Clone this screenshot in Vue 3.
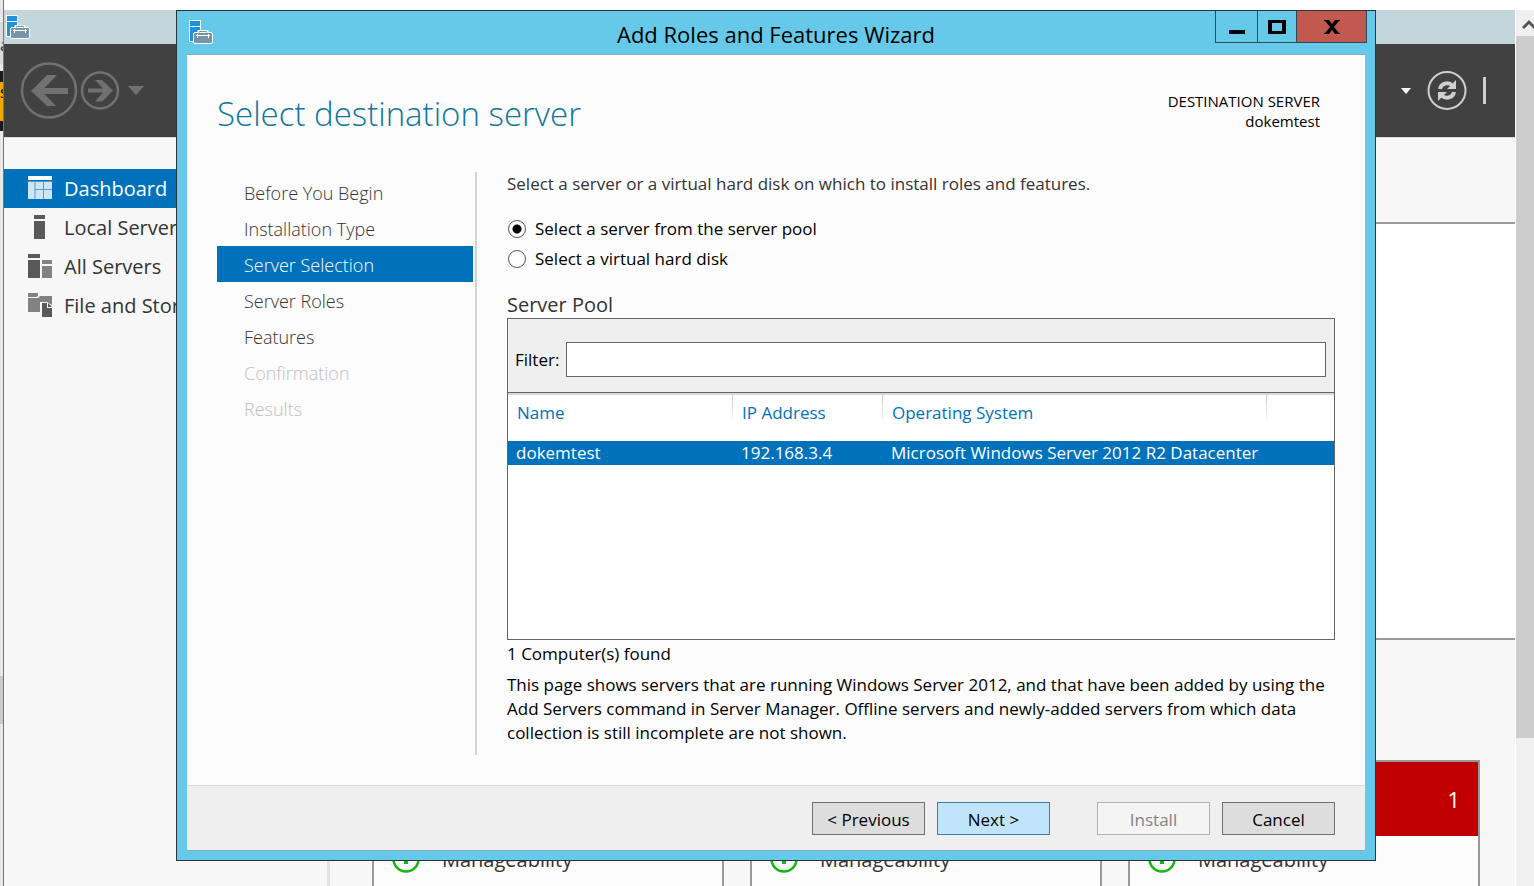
<script setup>
import { ref } from 'vue'

const sideItems = [
  { label: 'Dashboard', icon: 'dashboard', active: true },
  { label: 'Local Server', icon: 'local' },
  { label: 'All Servers', icon: 'all' },
  { label: 'File and Storage', icon: 'files' },
]
const steps = [
  { label: 'Before You Begin' },
  { label: 'Installation Type' },
  { label: 'Server Selection', state: 'current' },
  { label: 'Server Roles' },
  { label: 'Features' },
  { label: 'Confirmation', state: 'disabled' },
  { label: 'Results', state: 'disabled' },
]
const tiles = ['', '', '1']
const source = ref('pool')
const filter = ref('')
</script>

<template>
  <div class="screen">
    <div class="behind" aria-hidden="true">
      <div class="behind-tab">a</div>
      <div class="behind-ad">s</div>
      <div class="behind-thumb"></div>
    </div>

    <div class="manager">
      <header class="manager-title">
        <svg class="app-icon" viewBox="0 0 24 24">
          <rect x="0.5" y="0.5" width="11" height="21" fill="#1f8fdf" stroke="#fff" />
          <path d="M1 6.5h10" stroke="#fff" />
          <path d="M10 13v-1.500h8V13" fill="none" stroke="#fff" stroke-width="3" />
          <rect x="4.5" y="12.5" width="19" height="11" rx="1.5" fill="#7794aa" stroke="#fff" />
          <path d="M10.500 12.500v-1h7v1" fill="none" stroke="#7794aa" />
          <path d="M7 15.500h14" stroke="#fff" />
          <path d="M8.500 14v4M19.500 14v4" stroke="#fff" />
        </svg>
      </header>
      <div class="manager-bar">
        <button class="plain" aria-label="Back">
          <svg width="58" height="58" viewBox="0 0 58 58">
            <circle cx="29" cy="28.5" r="27" fill="none" stroke="#717171" stroke-width="2.5" />
            <path d="M11 29 27 13h10L24.500 26H48v6H24.500L36 44H27z" fill="#717171" />
          </svg>
        </button>
        <button class="plain" aria-label="Forward">
          <svg width="40" height="40" viewBox="0 0 40 40">
            <circle cx="20" cy="19.5" r="18" fill="none" stroke="#717171" stroke-width="2.5" />
            <path d="M33 19.500 22 9h-7l8 8.500H8v4h15l-8 9h7z" fill="#717171" />
          </svg>
        </button>
        <button class="plain history" aria-label="History">
          <svg width="16" height="9" viewBox="0 0 16 9"><path d="M0 0h16L8 9z" fill="#717171" /></svg>
        </button>
        <div class="bar-tools">
          <button class="plain" aria-label="Breadcrumb menu">
            <svg width="10" height="6" viewBox="0 0 10 6"><path d="M0 0h10L5 6z" fill="#fff" /></svg>
          </button>
          <button class="plain" aria-label="Refresh">
            <svg width="40" height="40" viewBox="0 0 40 40">
              <circle cx="20" cy="19.500" r="18.500" fill="none" stroke="#cfcfcf" stroke-width="2" />
              <path d="M13 18c1-6 8-7 12-4" fill="none" stroke="#cfcfcf" stroke-width="4" />
              <path d="M29 9v9h-9z" fill="#cfcfcf" />
              <path d="M27 21c-1 6-8 7-12 4" fill="none" stroke="#cfcfcf" stroke-width="4" />
              <path d="M11 30v-9h9z" fill="#cfcfcf" />
            </svg>
          </button>
          <span class="bar-rule"></span>
        </div>
      </div>
      <div class="manager-body">
        <nav class="side">
          <a v-for="item in sideItems" :key="item.label" href="#" class="side-item" :class="{ active: item.active }">
            <svg width="24" height="24" viewBox="0 0 24 24">
              <template v-if="item.icon === 'dashboard'">
                <path d="M0 0h24v4H0z" fill="#fff" />
                <path d="M0 5h24v18H0z" fill="#cfe4f4" />
                <path d="M7 6v17M15.500 6v17M7 13.500h17M0 5.500h24" stroke="#4a9fd8" />
              </template>
              <path v-else-if="item.icon === 'local'" d="M6 0h11v4H6zM6 6h11v18H6z" fill="#595959" />
              <template v-else-if="item.icon === 'all'">
                <path d="M0 0h12v4H0zM0 6h12v18H0z" fill="#595959" />
                <path d="M14 6h10v4H14zM14 12h10v12H14z" fill="#828282" />
              </template>
              <template v-else>
                <path d="M0 0h10v3l-2 1H0zM0 5h10l2-2h12v9l-5-3h-7v10H0z" fill="#828282" />
                <path d="M14 10h5v5h5v9H14zM20 10l4 4h-4z" fill="#595959" />
              </template>
            </svg>
            <span>{{ item.label }}</span>
          </a>
        </nav>
        <main class="dash">
          <section class="welcome"></section>
          <div class="tiles">
            <section v-for="(count, i) in tiles" :key="i" class="tile">
              <div class="tile-head">{{ count }}</div>
              <div class="tile-row">
                <svg width="28" height="28" viewBox="0 0 28 28">
                  <circle cx="14" cy="13" r="12.5" fill="none" stroke="#12b812" stroke-width="2.5" />
                  <path d="M14 4l6 7h-4v7h-4v-7H8z" fill="#12b812" />
                </svg>
                <span>Manageability</span>
              </div>
            </section>
          </div>
        </main>
      </div>
    </div>

    <div class="scroll" aria-hidden="true">
      <div class="scroll-up">
        <svg width="14" height="10" viewBox="0 0 14 10"><path d="M1 9l6-6 6 6" fill="none" stroke="#555" stroke-width="3" /></svg>
      </div>
      <div class="scroll-thumb"></div>
    </div>

    <section class="wizard" role="dialog" aria-labelledby="wizard-title">
      <header class="wizard-title">
        <svg class="app-icon" viewBox="0 0 24 24">
          <rect x="0.5" y="0.5" width="11" height="21" fill="#1f8fdf" stroke="#fff" />
          <path d="M1 6.500h10" stroke="#fff" />
          <path d="M10 13v-1.500h8V13" fill="none" stroke="#fff" stroke-width="3" />
          <rect x="4.5" y="12.5" width="19" height="11" rx="1.5" fill="#7794aa" stroke="#fff" />
          <path d="M10.500 12.500v-1h7v1" fill="none" stroke="#7794aa" />
          <path d="M7 15.500h14" stroke="#fff" />
          <path d="M8.500 14v4M19.500 14v4" stroke="#fff" />
        </svg>
        <h1 id="wizard-title">Add Roles and Features Wizard</h1>
        <div class="win-buttons">
          <button class="minimize" aria-label="Minimize">
            <svg width="16" height="14" viewBox="0 0 16 14"><path d="M0 10h16v4H0z" /></svg>
          </button>
          <button class="maximize" aria-label="Maximize">
            <svg width="18" height="14" viewBox="0 0 18 14"><path d="M0 0h18v14H0zM4 3v8h10V3z" fill-rule="evenodd" /></svg>
          </button>
          <button class="close" aria-label="Close">
            <svg width="16" height="14" viewBox="0 0 16 14"><path d="M0 0h5l3 4 3-4h5v1h-1l-5 6 5 6h1v1h-5l-3-4-3 4H0v-1h1l5-6-5-6H0z" /></svg>
          </button>
        </div>
      </header>

      <div class="wizard-client">
        <div class="wizard-head">
          <h2>Select destination server</h2>
          <p class="destination">DESTINATION SERVER<br />dokemtest</p>
        </div>
        <div class="wizard-body">
          <nav class="steps">
            <a v-for="step in steps" :key="step.label" href="#" :class="step.state">{{ step.label }}</a>
          </nav>
          <div class="page">
            <p class="intro">Select a server or a virtual hard disk on which to install roles and features.</p>
            <div class="options">
              <label><input v-model="source" type="radio" name="source" value="pool" />Select a server from the server pool</label>
              <label><input v-model="source" type="radio" name="source" value="disk" />Select a virtual hard disk</label>
            </div>
            <h3>Server Pool</h3>
            <div class="pool">
              <div class="filter">
                <label for="filter">Filter:</label>
                <input id="filter" v-model="filter" type="text" />
              </div>
              <table>
                <colgroup><col class="c-name" /><col class="c-ip" /><col class="c-os" /><col /></colgroup>
                <thead>
                  <tr><th>Name</th><th>IP Address</th><th>Operating System</th><th></th></tr>
                </thead>
                <tbody>
                  <tr><td>dokemtest</td><td>192.168.3.4</td><td>Microsoft Windows Server 2012 R2 Datacenter</td><td></td></tr>
                </tbody>
              </table>
            </div>
            <p class="found">1 Computer(s) found</p>
            <p class="note">This page shows servers that are running Windows Server 2012, and that have been added by using the Add Servers command in Server Manager. Offline servers and newly-added servers from which data collection is still incomplete are not shown.</p>
          </div>
        </div>
        <footer class="actions">
          <button>&lt; Previous</button>
          <button class="primary">Next &gt;</button>
          <button class="install" disabled>Install</button>
          <button>Cancel</button>
        </footer>
      </div>
    </section>
  </div>
</template>

<style>
body {
  margin: 0;
  background: #fff;
}
</style>

<style scoped>
* {
  box-sizing: border-box;
}
.screen {
  position: relative;
  display: flex;
  height: 100vh;
  overflow: hidden;
  font-family: "Open Sans", "Noto Sans", sans-serif;
  font-size: 17px;
  line-height: 24px;
  color: #000;
}
h1, h2, h3, p {
  margin: 0;
  font-weight: 400;
}
a {
  text-decoration: none;
  color: inherit;
}
button {
  font: inherit;
  padding: 0;
  border: 0;
  background: none;
}
svg {
  display: block;
  flex: none;
}
.behind {
  width: 4px;
  flex: none;
  background: #e8e8e6;
  border-right: 1px solid #777;
  overflow: hidden;
  display: flex;
  flex-direction: column;
}
.behind-tab {
  margin-top: 22px;
  height: 42px;
  background: #d9dadc;
  line-height: 46px;
  color: #333;
}
.behind-ad {
  margin-top: 7px;
  height: 60px;
  flex: none;
  background: #eaa800;
  border: solid #1a1a1a;
  border-width: 11px 0 10px;
  line-height: 20px;
}
.behind-thumb {
  margin-top: 545px;
  height: 48px;
  background: #cbcac8;
}
.manager {
  flex: 1;
  min-width: 0;
  margin-top: 10px;
  display: flex;
  flex-direction: column;
  background: #f7f7f7;
}
.manager-title {
  height: 34px;
  flex: none;
  padding: 5px 2px;
  background: #c3d6dc;
}
.app-icon {
  width: 24px;
  height: 24px;
}
.manager-bar {
  height: 94px;
  flex: none;
  display: flex;
  align-items: center;
  gap: 2px;
  padding: 0 29px 0 16px;
  background: #414141;
  border-bottom: 1px solid #dcdcdc;
}
.history {
  margin-left: 6px;
}
.bar-tools {
  margin-left: auto;
  display: flex;
  align-items: center;
  gap: 16px;
}
.bar-rule {
  width: 3px;
  height: 27px;
  background: #cfcfcf;
}
.manager-body {
  flex: 1;
  min-height: 0;
  display: flex;
}
.side {
  width: 326px;
  flex: none;
  padding-top: 31px;
  border-right: 3px solid #e3e3e3;
  font-size: 20px;
  line-height: 26px;
  color: #333;
}
.side-item {
  height: 39px;
  display: flex;
  align-items: flex-start;
  gap: 12px;
  padding: 7px 0 0 24px;
}
.side-item.active {
  background: #0072bc;
  color: #fff;
}
.dash {
  flex: 1;
  min-width: 0;
  padding-top: 84px;
}
.welcome {
  height: 418px;
  margin-left: 42px;
  border: solid #999;
  border-width: 2px 0 2px 2px;
  background: #fff;
}
.tiles {
  display: flex;
  gap: 26px;
  margin: 120px 35px 0 42px;
}
.tile {
  flex: 1;
  border: 2px solid #999;
  background: #fcfcfc;
}
.tile-head {
  height: 74px;
  padding-right: 18px;
  line-height: 74px;
  text-align: right;
  font-size: 22px;
  color: #fff;
  background: #c00000;
}
.tile-row {
  display: flex;
  align-items: center;
  gap: 22px;
  height: 100px;
  padding: 0 18px 52px;
  font-size: 20px;
  color: #333;
}
.scroll {
  width: 19px;
  flex: none;
  margin-top: 10px;
  border-left: 1px solid #fff;
  background: #f0f0f0;
}
.scroll-up {
  height: 26px;
  padding: 9px 0 0 6px;
  overflow: hidden;
}
.scroll-thumb {
  height: 702px;
  background: #cdcdcd;
}
.wizard {
  position: absolute;
  top: 10px;
  left: 176px;
  right: 158px;
  padding: 0 10px 9px;
  border: 1px solid #2b3338;
  background: #66c9ea;
}
.wizard-title {
  height: 43px;
  display: grid;
  grid-template-columns: 1fr auto 1fr;
  align-items: start;
}
.wizard-title .app-icon {
  margin: 9px 0 0 2px;
}
.wizard-title h1 {
  font-size: 22px;
  line-height: 46px;
}
.win-buttons {
  display: flex;
  justify-self: end;
  margin-right: -2px;
  border: 1px solid #2b4a56;
  border-top: 0;
}
.win-buttons button {
  height: 31px;
  display: grid;
  place-items: center;
}
.win-buttons button + button {
  border-left: 1px solid #2b4a56;
}
.minimize {
  width: 41px;
}
.maximize {
  width: 39px;
}
.win-buttons .close {
  width: 70px;
  background: #c1594f;
}
.wizard-client {
  border: solid #7fa9bd;
  border-width: 1px 0;
  background: #fcfcfc;
}
.wizard-head {
  display: flex;
  justify-content: space-between;
  padding: 36px 45px 0 30px;
}
.wizard-head h2 {
  font-size: 33px;
  font-weight: 300;
  line-height: 46px;
  color: #0f769c;
}
.destination {
  text-align: right;
  font-size: 15px;
  line-height: 20px;
}
.wizard-body {
  display: flex;
  gap: 30px;
  margin-top: 35px;
  padding: 0 30px;
}
.steps {
  width: 260px;
  flex: none;
  padding: 2px 2px 0 0;
  border-right: 2px solid #d2d2d2;
  font-size: 18px;
  font-weight: 300;
}
.steps a {
  display: block;
  height: 36px;
  padding-left: 27px;
  line-height: 38px;
  color: #333;
}
.steps a.current {
  background: #0072bc;
  color: #fff;
}
.steps a.disabled {
  color: #c0c0c0;
}
.page {
  flex: 1;
  min-width: 0;
  height: 583px;
}
.intro {
  color: #333;
}
.options {
  margin-top: 18px;
}
.options label {
  display: flex;
  align-items: center;
  gap: 9px;
  height: 30px;
}
.options input {
  appearance: none;
  width: 18px;
  height: 18px;
  margin: 0 0 0 1px;
  border: 1px solid #555;
  border-radius: 50%;
  background: #fff;
}
.options input:checked {
  background: radial-gradient(circle, #000 4px, #fff 5px);
}
.page h3 {
  margin-top: 18px;
  font-size: 20px;
  line-height: 26px;
  color: #333;
}
.pool {
  height: 322px;
  border: 1px solid #666;
  background: #fff;
}
.filter {
  height: 74px;
  display: flex;
  align-items: center;
  gap: 7px;
  padding: 8px 8px 0 7px;
  border-bottom: 1px solid #666;
  background: #efefef;
}
.filter input {
  flex: 1;
  min-width: 0;
  height: 35px;
  padding: 0 6px;
  border: 1px solid #666;
  background: #fff;
  font: inherit;
}
table {
  width: 100%;
  table-layout: fixed;
  border-collapse: separate;
  border-spacing: 0;
}
.c-name {
  width: 225px;
}
.c-ip {
  width: 150px;
}
.c-os {
  width: 384px;
}
th {
  height: 48px;
  padding: 6px 0 0 9px;
  border-top: 2px solid #d9d9d9;
  background: linear-gradient(#c8c8c8, #fff) right top / 1px 28px no-repeat;
  text-align: left;
  vertical-align: top;
  font-weight: 400;
  color: #0072bc;
}
th:last-child {
  background: none;
}
td {
  height: 24px;
  padding: 0 0 0 8px;
  background: #0072bc;
  color: #fff;
  white-space: nowrap;
}
.found {
  margin: 2px 0 7px;
}
.actions {
  display: flex;
  justify-content: flex-end;
  gap: 12px;
  height: 65px;
  margin-top: 30px;
  padding: 16px 30px 0;
  border-top: 1px solid #dadada;
  background: #efefef;
}
.actions button {
  width: 113px;
  height: 33px;
  padding-top: 2px;
  border: 1px solid #707070;
  background: #ddd;
}
.actions .primary {
  border-color: #3c7fb1;
  background: #c0e4fa;
}
.actions .install {
  margin-left: 35px;
  border-color: #adb2b5;
  background: #f4f4f4;
  color: #838383;
}
</style>
